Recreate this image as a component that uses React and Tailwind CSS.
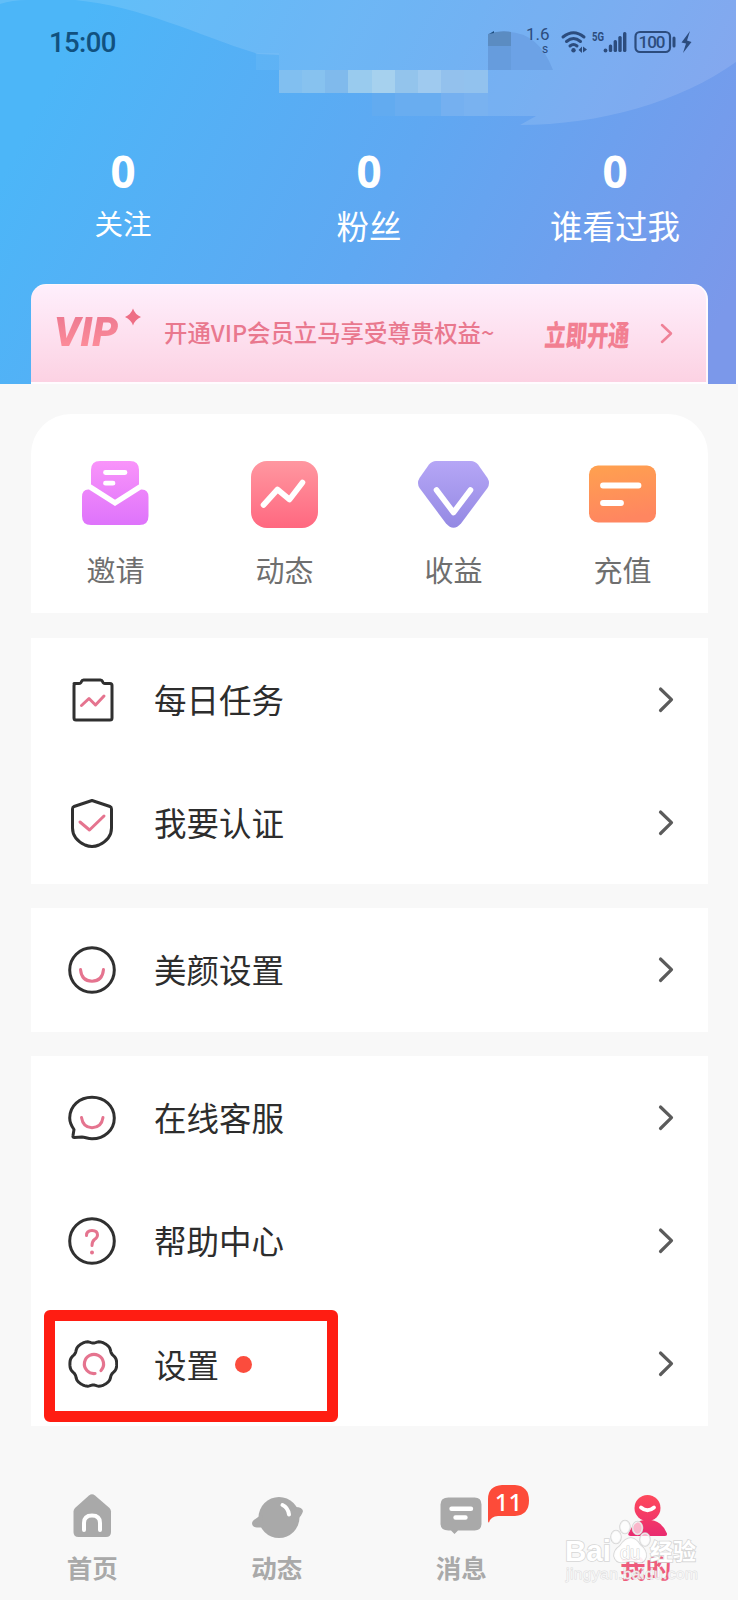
const STATS = [
  { label: '关注', size: 'text-[28.5px] leading-[40px]' },
  { label: '粉丝', size: 'text-[32.5px] leading-[44px]' },
  { label: '谁看过我', size: 'text-[32.5px] leading-[44px]' },
]

const MOSAIC = [
  [488, 46, 23, 24, '#669cdd'],
  [279, 70, 23, 23, '#81bff0'], [302, 70, 23, 23, '#87c2ef'], [325, 70, 23, 23, '#80baec'],
  [348, 70, 24, 23, '#99cbee'], [372, 70, 23, 23, '#a6d1ee'], [395, 70, 23, 23, '#93c4ec'],
  [418, 70, 23, 23, '#9fcaef'], [441, 70, 23, 23, '#93c1ed'], [464, 70, 24, 23, '#92c2ee'],
  [372, 93, 23, 23, '#62abf0'], [395, 93, 46, 23, '#69adf0'], [441, 93, 23, 23, '#75b0f0'],
  [464, 93, 24, 23, '#79b2f0'],
]

function HeaderBackdrop() {
  return (
    <svg className="absolute inset-0" width="736" height="384" viewBox="0 0 736 384">
      <defs>
        <linearGradient id="sky" gradientUnits="userSpaceOnUse" x1="60" y1="60" x2="690" y2="380">
          <stop offset="0" stopColor="#4cb6f8" />
          <stop offset="0.5" stopColor="#5fa8f2" />
          <stop offset="1" stopColor="#7b98ea" />
        </linearGradient>
      </defs>
      <rect width="736" height="384" fill="url(#sky)" />
      <path d="M0 0H28Q12 0 0 4Z" fill="#fff" opacity="0.12" />
      <path
        d="M75 0C140 6 200 36 258 54L279 55V70H488V116H536L520 125C600 125 680 102 736 62V0Z"
        fill="#fff"
        opacity="0.12"
      />
      <rect x="256" y="53" width="23" height="17" fill="#fff" opacity="0.05" />
      <path d="M488 34Q535 22 553 70H488Z" fill="#6ca2e6" />
      {MOSAIC.map(([x, y, w, h, fill]) => (
        <rect key={`${x}-${y}`} x={x} y={y} width={w} height={h} fill={fill} />
      ))}
      <path d="M488 34Q500 30 511 32V46H488Z" fill="#5b8cc2" />
      <path d="M489 34L494 31V33Z" fill="#1f4f80" />
    </svg>
  )
}

function StatusIcons() {
  return (
    <svg width="212" height="44" viewBox="488 20 212 44" fill="#2c4c7d">
      <g fontFamily="Roboto, sans-serif" fontSize="17" fontWeight="400">
        <text x="526" y="40">1.6</text>
        <text x="542" y="53" fontSize="12">s</text>
        <text x="592" y="41" fontSize="13" fontWeight="700" textLength="12" lengthAdjust="spacingAndGlyphs">5G</text>
        <text x="638.5" y="48" fontSize="17" fontWeight="500" textLength="27">100</text>
      </g>
      <g fill="none" stroke="#2c4c7d" strokeWidth="3" strokeLinecap="round">
        <path d="M563 37Q573.500 28.500 584 37" />
        <path d="M566.500 41.500Q573.500 35.500 580.500 41.500" />
        <path d="M570 46Q573.500 43 577 46" />
      </g>
      <circle cx="573.500" cy="50.300" r="2.200" />
      <path d="M578.500 50L582 46.500V53ZM583 46.500L587 49.500L583 52.500Z" />
      <circle cx="605.500" cy="50.500" r="1.900" />
      <rect x="608.800" y="44.500" width="3.400" height="7.500" rx="1.500" />
      <rect x="613.600" y="40" width="3.400" height="12" rx="1.500" />
      <rect x="618.300" y="36" width="3.400" height="16" rx="1.500" />
      <rect x="623" y="32" width="3.400" height="20" rx="1.500" />
      <rect x="635.500" y="32" width="34.500" height="20" rx="4.500" fill="none" stroke="#2c4c7d" strokeWidth="2.200" />
      <rect x="672.500" y="36.500" width="3" height="11" rx="1.500" />
      <path d="M690 31L681.500 42.500L686 43.500L683 53L691.500 42L687 40.500Z" />
    </svg>
  )
}

function Header() {
  return (
    <header className="relative flex h-[384px] w-[736px] flex-col">
      <HeaderBackdrop />
      <div className="relative flex h-[84px] items-center justify-between pr-[36px] pl-[49px]">
        <span className="pt-[2px] font-[Roboto,sans-serif] text-[27.5px] font-medium tracking-[-0.6px] text-[#11517f]">15:00</span>
        <StatusIcons />
      </div>
      <div className="relative grid w-[738px] grid-cols-3 pt-[59px] text-center text-white">
        {STATS.map((s) => (
          <div key={s.label} className="flex flex-col items-center">
            <span className="mb-[4px] font-['Noto_Sans',sans-serif] text-[44px] leading-[56px] font-bold">0</span>
            <span className={s.size}>{s.label}</span>
          </div>
        ))}
      </div>
      <VipBanner />
    </header>
  )
}

function VipBanner() {
  return (
    <div className="relative mt-auto ml-[31px] flex h-[100px] w-[677px] items-center rounded-t-[15px] border-t border-r-2 border-b-2 border-white/80 bg-linear-to-b from-[#feeffc] to-[#fcd2e3] pl-[23px] text-[#e9788e]">
      <span className="-mr-[18px] w-[80px] origin-left -translate-y-[1px] bg-linear-to-b from-[#ec7890] to-[#ff8f9b] bg-clip-text font-[Roboto,sans-serif] text-[41px] leading-none font-black italic whitespace-nowrap text-transparent">
        VIP
      </span>
      <svg className="ml-[8px] -translate-y-[17px]" width="18" height="18" viewBox="0 0 18 18">
        <path d="M9 0.500Q11 6.500 17 9Q11 11.500 9 17.500Q7 11.500 1 9Q7 6.500 9 0.500Z" fill="#ee6e85" />
      </svg>
      <span className="ml-[22px] -translate-y-[1px] text-[23.4px] leading-none font-medium whitespace-nowrap">开通VIP会员立马享受尊贵权益~</span>
      <span className="ml-auto w-[86px] origin-left scale-x-[0.73] -skew-x-6 text-[29px] leading-none font-black whitespace-nowrap text-[#f27f92]">
        立即开通
      </span>
      <svg className="mr-[33px] ml-[29px]" width="13" height="21" viewBox="0 0 13 21" fill="none" stroke="#ef8197" strokeWidth="2.500" strokeLinecap="round" strokeLinejoin="round">
        <path d="M2 2L11 10.500L2 19" />
      </svg>
    </div>
  )
}

const SHORTCUTS = [
  {
    label: '邀请',
    icon: (
      <>
        <defs>
          <linearGradient id="invite" gradientUnits="userSpaceOnUse" x1="34" y1="2" x2="34" y2="66">
            <stop offset="0" stopColor="#f994fa" />
            <stop offset="1" stopColor="#de73fb" />
          </linearGradient>
        </defs>
        <path d="M19 2H49Q58 2 58 11V27L34 42L10 27V11Q10 2 19 2Z" fill="url(#invite)" />
        <path d="M24.500 13.500H44M24.500 24.200H32" stroke="#fff" strokeWidth="4.800" strokeLinecap="round" />
        <path d="M8 30.500L34 47L60 30.500Q67.500 30 67.500 38V57Q67.500 66 58.500 66H10Q1 66 1 57V38Q1 30 8 30.500Z" fill="url(#invite)" />
        <path d="M9 27.500L34 43.500L59 27.500" fill="none" stroke="#fff" strokeWidth="4.500" />
      </>
    ),
  },
  {
    label: '动态',
    icon: (
      <>
        <defs>
          <linearGradient id="feed" x1="0" y1="0" x2="0" y2="1">
            <stop offset="0" stopColor="#ff97a0" />
            <stop offset="1" stopColor="#ff6880" />
          </linearGradient>
        </defs>
        <rect x="1" y="2" width="67" height="67" rx="16" fill="url(#feed)" />
        <path d="M13.500 46L27.500 30.500L39.500 40.500L52.500 23.500" fill="none" stroke="#fff" strokeWidth="5.600" strokeLinecap="round" strokeLinejoin="round" />
      </>
    ),
  },
  {
    label: '收益',
    icon: (
      <>
        <defs>
          <linearGradient id="income" x1="0" y1="0" x2="0" y2="1">
            <stop offset="0" stopColor="#b5a6f6" />
            <stop offset="1" stopColor="#9489e3" />
          </linearGradient>
        </defs>
        <path
          d="M17 2H52Q56 2 59 5.500L68.500 19Q71.500 24 68.500 29L42 64.500Q34.500 73 27 64.500L0.500 29Q-2.500 24 0.500 19L10 5.500Q13 2 17 2Z"
          fill="url(#income)"
        />
        <path d="M17.500 31L34.500 53.500L51.500 31" fill="none" stroke="#fff" strokeWidth="5.600" strokeLinecap="round" strokeLinejoin="round" />
      </>
    ),
  },
  {
    label: '充值',
    icon: (
      <>
        <defs>
          <linearGradient id="topup" x1="0" y1="0" x2="0.200" y2="1">
            <stop offset="0" stopColor="#ffa14f" />
            <stop offset="1" stopColor="#ff8660" />
          </linearGradient>
        </defs>
        <rect x="1" y="6.500" width="67" height="57" rx="9" fill="url(#topup)" />
        <path d="M15 26.500H50.500M15 44H33" stroke="#fff" strokeWidth="5.800" strokeLinecap="round" />
      </>
    ),
  },
]

function Shortcuts() {
  return (
    <section className="mt-[30px] h-[199px] rounded-t-[40px] bg-white pt-[45px]">
      <div className="grid w-[676px] grid-cols-4">
        {SHORTCUTS.map((s) => (
          <div key={s.label} className="flex flex-col items-center">
            <svg width="69" height="71" viewBox="0 0 69 71" className="overflow-visible">{s.icon}</svg>
            <span className="mt-[19px] text-[29px] leading-[40px] text-[#6f6f6f]">{s.label}</span>
          </div>
        ))}
      </div>
    </section>
  )
}

const PINK = '#e5748f'

// settings gear outline: six broad lobes with narrow dips between them
const GEAR = Array.from({ length: 90 }, (_, i) => {
  const a = (i * Math.PI) / 45
  const r = 23.4 - 2.4 * Math.abs(Math.sin(3 * a)) ** 5
  return `${(27.3 + r * Math.cos(a)).toFixed(2)},${(26 + r * Math.sin(a)).toFixed(2)}`
}).join(' ')

const ICONS = {
  task: (
    <>
      <path d="M8 9.500H13Q15 9.500 15.500 7.500Q16 6 17.500 6H34.500Q36 6 36.500 7.500Q37 9.500 39 9.500H44Q46 9.500 46 11.500V44Q46 46 44 46H10Q8 46 8 44V11.500Q8 9.500 10 9.500Z" />
      <path d="M15.500 31.500L23 24.500L29.500 31L38 22" stroke={PINK} />
    </>
  ),
  verify: (
    <>
      <path d="M26 3.500L44 9.500Q45.500 10 45.500 12V31Q45.500 42 33 48Q26 51 19 48Q6.500 42 6.500 31V12Q6.500 10 8 9.500Z" />
      <path d="M14 25L23.500 33L38 19" stroke={PINK} />
    </>
  ),
  beauty: (
    <>
      <circle cx="26" cy="26" r="22.300" />
      <path d="M14.500 25.500Q15.500 37 26 37.200Q36.500 37 37.500 25.500" stroke={PINK} />
    </>
  ),
  service: (
    <>
      <path d="M8 37.500C5.500 34 3.700 30.500 3.700 26C3.700 14 13.500 5.200 26 5.200S48.300 14 48.300 26S38.500 46.800 26 46.800C21.500 46.800 19 45 16 45L8.500 45.500Q6.500 45.500 7 43.500Z" />
      <path d="M15.500 25.500Q17 35.500 26 35.800Q35.500 35.500 37 25.500" stroke={PINK} />
    </>
  ),
  help: (
    <>
      <circle cx="26" cy="26" r="22.300" />
      <path d="M20.500 20.500Q20.500 15.500 26 15.500Q31.500 15.500 31.500 20Q31.500 22.500 28.500 24.500Q26 26.500 26 30.500" stroke={PINK} strokeWidth="3" />
      <circle cx="26" cy="37.500" r="2" fill={PINK} stroke="none" />
    </>
  ),
  settings: (
    <>
      <polygon points={GEAR} />
      <path d="M35 32.500A9.600 9.600 0 1 0 29 35.500" stroke={PINK} strokeWidth="3.200" />
    </>
  ),
}

const GROUPS = [
  { height: 'mt-[25px] h-[246px]', rows: [{ label: '每日任务', icon: 'task' }, { label: '我要认证', icon: 'verify' }] },
  { height: 'mt-[24px] h-[124px]', rows: [{ label: '美颜设置', icon: 'beauty' }] },
  {
    height: 'mt-[24px] h-[370px]',
    rows: [
      { label: '在线客服', icon: 'service' },
      { label: '帮助中心', icon: 'help' },
      { label: '设置', icon: 'settings', marked: true },
    ],
  },
]

function MenuRow({ label, icon, marked }) {
  return (
    <div className="relative flex flex-1 items-center pr-[34px] pl-[35px]">
      <svg width="52" height="52" viewBox="0 0 52 52" fill="none" stroke="#303030" strokeWidth="3" strokeLinecap="round" strokeLinejoin="round">
        {ICONS[icon]}
      </svg>
      <span className="ml-[36px] pb-[1px] text-[32.5px] leading-none text-[#2d2d2d]">{label}</span>
      {marked && <span className="ml-[16px] size-[17px] rounded-full bg-[#fb4c3d]" />}
      <svg className="ml-auto" width="17" height="28" viewBox="0 0 17 28" fill="none" stroke="#5b5b5b" strokeWidth="3.200" strokeLinecap="round" strokeLinejoin="round">
        <path d="M3.500 3L14.500 13.700L3.500 24.500" />
      </svg>
      {marked && (
        <div className="absolute top-[7px] left-[12.500px] h-[112px] w-[294px] rounded-[6px] border-[11.500px] border-[#ff1d12]" />
      )}
    </div>
  )
}

const TABS = [
  {
    label: '首页',
    icon: (
      <>
        <path d="M29 5.500Q32 3 35 5.500L49.500 18Q51 19.500 51 21.500V42Q51 47 46 47H18.500Q13.500 47 13.500 42V21.500Q13.500 19.500 15 18Z" fill="#a9a9a9" />
        <path d="M24 40V33Q24 25.500 32 25.500Q40 25.500 40 33V40" fill="none" stroke="#fff" strokeWidth="4" strokeLinecap="round" />
      </>
    ),
  },
  {
    label: '动态',
    icon: (
      <>
        <circle cx="34" cy="27.500" r="20.500" fill="#a9a9a9" />
        <path d="M17 25Q8 29 7 33Q7 37 12 37.500H19ZM49 17Q57 16.500 58 21Q57 26 52 29Z" fill="#a9a9a9" />
        <path d="M37.500 15Q43 17.500 44 24.500" fill="none" stroke="#fff" strokeWidth="4" strokeLinecap="round" />
      </>
    ),
  },
  {
    label: '消息',
    icon: (
      <>
        <path d="M19.500 7.500H45.500Q52.500 7.500 52.500 14.500V33.500Q52.500 40.500 45.500 40.500H29L25.500 44L22 40.500H19.500Q11.500 40.500 11.500 33.500V14.500Q11.500 7.500 19.500 7.500Z" fill="#a9a9a9" />
        <path d="M22.500 18.700H42M26.500 27.500H36.500" stroke="#fff" strokeWidth="4.400" strokeLinecap="round" />
      </>
    ),
    badge: '11',
  },
  {
    label: '我的',
    icon: (
      <>
        <defs>
          <linearGradient id="me" gradientUnits="userSpaceOnUse" x1="34" y1="4" x2="34" y2="46">
            <stop offset="0" stopColor="#ff4a5b" />
            <stop offset="1" stopColor="#e92b70" />
          </linearGradient>
        </defs>
        <circle cx="33.500" cy="18" r="13" fill="url(#me)" />
        <path d="M30 28H37V30Q48.500 32 53 43.500Q53.500 46 50.500 46H16.500Q13.500 46 14.500 43.500Q18.500 32 30 30Z" fill="url(#me)" />
        <path d="M27 17.500Q33.500 23 40 17.500" fill="none" stroke="#fff" strokeWidth="3.800" strokeLinecap="round" />
      </>
    ),
    active: true,
  },
]

function TabBar() {
  return (
    <nav className="mt-[64px] grid w-[738px] grid-cols-4">
      {TABS.map((t) => (
        <div key={t.label} className="relative flex flex-col items-center">
          <svg width="64" height="50" viewBox="0 0 64 50">{t.icon}</svg>
          <span className={`mt-[7px] text-[25.5px] leading-[40px] font-bold ${t.active ? 'text-[#ee5c7c]' : 'text-[#a9a9a9]'}`}>
            {t.label}
          </span>
          {t.badge && (
            <div className="absolute -top-[5px] left-[119px] h-[38px] w-[42px]">
              <svg className="absolute inset-0" width="42" height="38" viewBox="0 0 42 38">
                <path d="M14 0H27Q41 1 41 15.500T27 31H10Q3 31 1 37.500Q0 38 0 35V14Q0 1 14 0Z" fill="#fd4b39" />
              </svg>
              <span className="relative block w-[41px] text-center font-['Noto_Sans',sans-serif] text-[24px] leading-[33px] font-medium text-white">
                {t.badge}
              </span>
            </div>
          )}
        </div>
      ))}
      <Watermark />
    </nav>
  )
}

function Watermark() {
  return (
    <svg className="absolute top-[1510px] left-[560px]" width="148" height="84" viewBox="560 1510 148 84" fill="#fff" stroke="#d6d6d6" strokeWidth="1.600" paintOrder="stroke">
      <g fontFamily="'Liberation Sans', sans-serif" fontWeight="700">
        <text x="565" y="1561" fontSize="30" textLength="46" lengthAdjust="spacingAndGlyphs">Bai</text>
        <g fillOpacity="0.65">
          <ellipse cx="616" cy="1537" rx="5" ry="6.500" />
          <ellipse cx="625" cy="1527" rx="5" ry="6.500" />
          <ellipse cx="637.500" cy="1528" rx="5" ry="6.500" />
          <ellipse cx="645" cy="1539.500" rx="5" ry="6.500" />
        </g>
        <path d="M631 1538Q637 1539 640 1545Q647 1550 646 1557Q644 1564 636 1562Q631 1560 625 1562Q616 1564 614 1556Q614 1550 620 1546Q625 1538 631 1538Z" fillOpacity="0.9" />
        <text x="620" y="1559" fontSize="18" fontWeight="400" strokeWidth="1.200">du</text>
      </g>
      <text x="650" y="1560" fontSize="23" fontWeight="700" fontFamily="'Noto Sans CJK SC', sans-serif" textLength="46">经验</text>
      <text x="566" y="1579" fontSize="15.500" fontFamily="'Liberation Sans', sans-serif" strokeWidth="1" fillOpacity="0.7" strokeOpacity="0.8" textLength="132">jingyan.baidu.com</text>
    </svg>
  )
}

export default function App() {
  return (
    <div className="relative h-[1600px] w-[738px] overflow-hidden bg-[#f8f8f8] font-['Noto_Sans_CJK_SC',sans-serif]">
      <div className="bg-white">
        <Header />
      </div>
      <main className="ml-[31px] flex w-[677px] flex-col">
        <Shortcuts />
        {GROUPS.map((g) => (
          <section key={g.height} className={`flex flex-col bg-white ${g.height}`}>
            {g.rows.map((r) => (
              <MenuRow key={r.label} {...r} />
            ))}
          </section>
        ))}
      </main>
      <TabBar />
    </div>
  )
}
